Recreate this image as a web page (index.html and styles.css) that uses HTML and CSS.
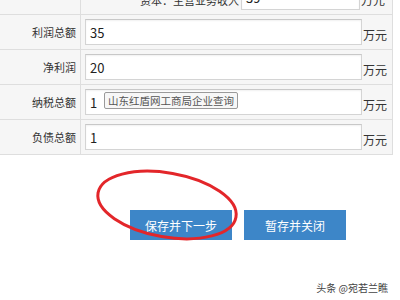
FILE: index.html
```html
<!DOCTYPE html>
<html>
<head>
<meta charset="utf-8">
<link rel="stylesheet" href="styles.css">
</head>
<body>
<div class="page">
  <div class="form">
    <div class="row row-top">
      <div class="label"></div>
      <div class="wide-label">资本：主营业务收入</div>
      <div class="field short"><span class="value">39</span></div>
      <div class="unit">万元</div>
    </div>
    <div class="row">
      <div class="label">利润总额</div>
      <div class="field"><span class="value">35</span></div>
      <div class="unit">万元</div>
    </div>
    <div class="row">
      <div class="label">净利润</div>
      <div class="field"><span class="value">20</span></div>
      <div class="unit">万元</div>
    </div>
    <div class="row">
      <div class="label">纳税总额</div>
      <div class="field"><span class="value">1</span><span class="tooltip">山东红盾网工商局企业查询</span></div>
      <div class="unit">万元</div>
    </div>
    <div class="row">
      <div class="label">负债总额</div>
      <div class="field"><span class="value">1</span></div>
      <div class="unit">万元</div>
    </div>
  </div>
  <div class="actions">
    <button class="btn">保存并下一步</button>
    <button class="btn">暂存并关闭</button>
  </div>
  <svg class="circle" width="400" height="300" viewBox="0 0 400 300">
    <ellipse cx="167" cy="205" rx="70" ry="32" transform="rotate(10 167 205)" fill="none" stroke="#e3262a" stroke-width="3"/>
  </svg>
  <div class="watermark">头条 @宛若兰瞧</div>
</div>
</body>
</html>
```
FILE: styles.css
```css
html, body {
  margin: 0;
  padding: 0;
  background: #fff;
}
body {
  font-family: "Noto Sans CJK SC", "Noto Sans", sans-serif;
  color: #333;
}
.page {
  position: relative;
  width: 400px;
  height: 300px;
  overflow: hidden;
}
.form {
  width: 392px;
  margin-top: -20px;
  border-right: 1px solid #dedede;
}
.row {
  display: flex;
  height: 34px;
  border-bottom: 1px solid #dedede;
  background: #f6f6f6;
}
.label {
  width: 76px;
  padding-right: 4px;
  flex: none;
  border-right: 1px solid #dedede;
  text-align: right;
  font-size: 11px;
  line-height: 34px;
  color: #333;
}
.wide-label {
  width: 158px;
  flex: none;
  text-align: right;
  font-size: 11px;
  line-height: 40px;
  color: #333;
}
.field {
  position: relative;
  box-sizing: border-box;
  width: 277px;
  height: 26px;
  margin: 4px 0 0 4px;
  background: #fff;
  border: 1px solid #d4d4d4;
  border-top-color: #c8c8c8;
  box-shadow: inset 0 1px 2px rgba(0,0,0,0.06);
  display: flex;
  align-items: center;
  flex: none;
}
.field.short {
  width: 119px;
  margin-left: 2px;
}
.value {
  padding-left: 4px;
  font-size: 13px;
  color: #222;
}
.tooltip {
  position: absolute;
  left: 18px;
  top: 2px;
  height: 17px;
  padding: 0 3px;
  box-sizing: border-box;
  border: 1px solid #9a9a9a;
  border-radius: 2px;
  background: #f7f7f7;
  font-size: 10.5px;
  line-height: 15px;
  color: #555;
  white-space: nowrap;
}
.unit {
  font-size: 12px;
  line-height: 14px;
  padding-top: 13px;
  margin-left: 1px;
  color: #333;
}
.actions {
  display: flex;
  gap: 12px;
  padding-left: 130px;
  margin-top: 55px;
}
.btn {
  width: 102px;
  height: 30px;
  border: none;
  background: #3d86c8;
  color: #fff;
  font-family: "Noto Sans CJK SC", sans-serif;
  font-size: 12px;
  padding: 0;
}
.circle {
  position: absolute;
  left: 0;
  top: 0;
  pointer-events: none;
}
.watermark {
  position: absolute;
  right: 12px;
  top: 280px;
  font-size: 10px;
  color: #444;
}
```
